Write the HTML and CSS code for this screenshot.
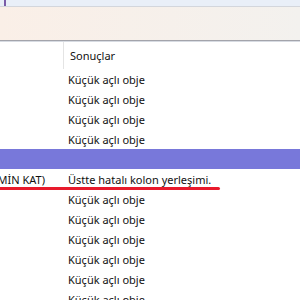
FILE: index.html
```html
<!DOCTYPE html>
<html lang="tr">
<head>
    <meta charset="UTF-8">
    <title>Sonuçlar</title>
    <link rel="stylesheet" href="styles.css">
</head>
<body>

<div class="window">
    <div class="titlestrip">
        <span class="corner-icon"></span>
    </div>
    <div class="toolbar"></div>

    <div class="list">
        <div class="head">
            <div class="cell first"></div>
            <div class="cell col">Sonuçlar</div>
        </div>
        <div class="row"><div class="cell first"></div><div class="cell">Küçük açlı obje</div></div>
        <div class="row"><div class="cell first"></div><div class="cell">Küçük açlı obje</div></div>
        <div class="row"><div class="cell first"></div><div class="cell">Küçük açlı obje</div></div>
        <div class="row"><div class="cell first"></div><div class="cell">Küçük açlı obje</div></div>
        <div class="row selected"><div class="cell first"></div><div class="cell"></div></div>
        <div class="row marked">
            <div class="cell first"><span>(ZEMİN KAT)</span></div>
            <div class="cell">Üstte hatalı kolon yerleşimi.</div>
            <span class="underline"></span>
        </div>
        <div class="row"><div class="cell first"></div><div class="cell">Küçük açlı obje</div></div>
        <div class="row"><div class="cell first"></div><div class="cell">Küçük açlı obje</div></div>
        <div class="row"><div class="cell first"></div><div class="cell">Küçük açlı obje</div></div>
        <div class="row"><div class="cell first"></div><div class="cell">Küçük açlı obje</div></div>
        <div class="row"><div class="cell first"></div><div class="cell">Küçük açlı obje</div></div>
        <div class="row"><div class="cell first"></div><div class="cell">Küçük açlı obje</div></div>
    </div>
</div>

</body>
</html>
```

FILE: styles.css
```css
body {
    margin: 0;
    padding: 0;
    background-color: #ffffff;
    font-family: 'Noto Sans', 'Liberation Sans', sans-serif;
    font-size: 11px;
    color: #111111;
    overflow: hidden;
}
.window {
    width: 300px;
    height: 300px;
    overflow: hidden;
}
.titlestrip {
    height: 6px;
    background-color: #e9eff8;
    border-bottom: 1px solid #d3d6dc;
}
.corner-icon {
    display: block;
    width: 2px;
    height: 6px;
    margin-left: 4px;
    background-color: #7a5ca8;
}
.toolbar {
    height: 33px;
    background: linear-gradient(to right, #faefe7, #f3f1ee);
    border-bottom: 1px solid #a3a4ab;
    box-shadow: 0 1px 0 #d7dbe2;
}
.list {
    margin-top: 1px;
}
.head, .row {
    display: grid;
    grid-template-columns: 63px 1fr;
    position: relative;
}
.head {
    height: 27px;
    align-items: center;
}
.head .col {
    border-left: 1px solid #e4e4e4;
    padding-left: 6px;
    height: 100%;
    display: flex;
    align-items: center;
}
.row {
    height: 20px;
    align-items: center;
}
.row .cell + .cell {
    padding-left: 5px;
    white-space: nowrap;
}
.cell.first {
    overflow: hidden;
    display: flex;
    justify-content: flex-end;
    padding-right: 18px;
    white-space: nowrap;
}
.selected {
    background-color: #7878da;
}
.underline {
    position: absolute;
    left: -4px;
    top: 18px;
    width: 224px;
    height: 3px;
    border-radius: 2px;
    background-color: #e81a2c;
}
```
